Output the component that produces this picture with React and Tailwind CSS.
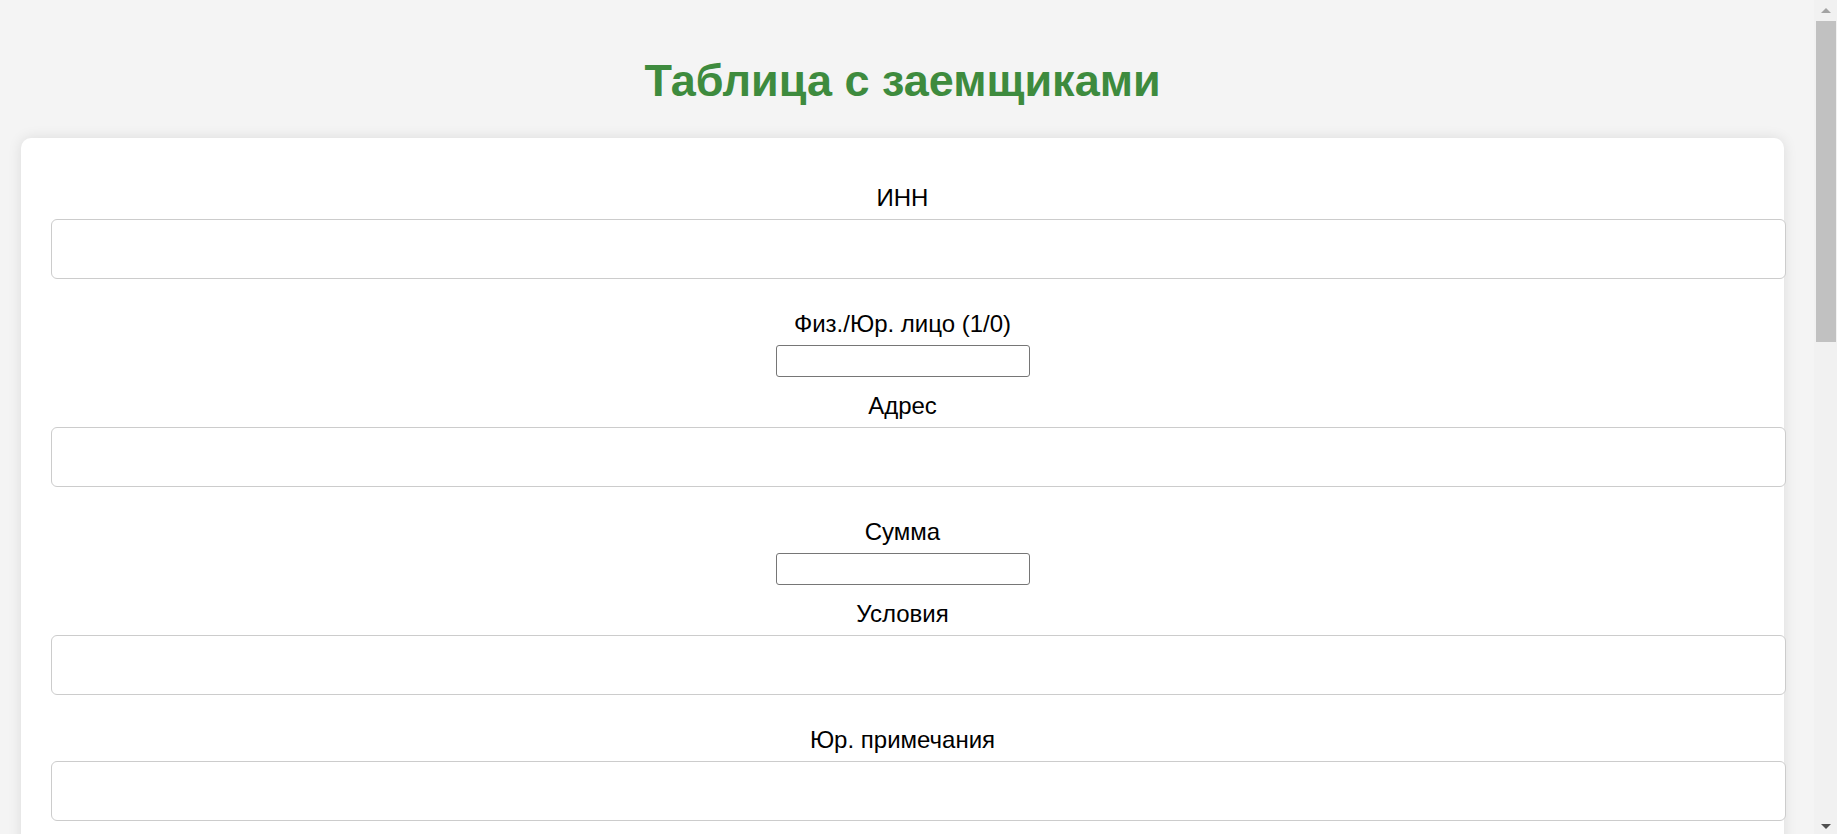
import React from "react";

function Label({ children }) {
  return (
    <label className="block mt-[15px] mb-[8px] text-[24px] leading-[27px] text-black text-center">
      {children}
    </label>
  );
}

function WideInput() {
  return (
    <input
      type="text"
      className="block w-[calc(100%+32px)] h-[60px] mb-[16px] bg-white border border-[#cccccc] rounded-[6px] px-[15px] outline-none"
    />
  );
}

function SmallInput() {
  return (
    <input
      type="text"
      className="block self-center w-[254px] h-[32px] bg-white border border-[#767676] rounded-[3px] px-[3px] outline-none"
    />
  );
}

const fields = [
  { label: "ИНН", wide: true },
  { label: "Физ./Юр. лицо (1/0)", wide: false },
  { label: "Адрес", wide: true },
  { label: "Сумма", wide: false },
  { label: "Условия", wide: true },
  { label: "Юр. примечания", wide: true },
];

export default function App() {
  return (
    <div className="flex h-screen overflow-hidden font-['Liberation_Sans',Arial,sans-serif]">
      <div className="flex-1 min-w-0 overflow-hidden bg-[#f4f4f4]">
        <div className="ml-[21px] w-[1763px] pt-[55px]">
          <h1 className="text-center text-[45px] leading-[52px] font-bold text-[#3e8b3e] mb-[31px]">
            Таблица с заемщиками
          </h1>
          <form className="flex flex-col bg-white rounded-[10px] shadow-[0_0_14px_rgba(0,0,0,0.1)] px-[30px] pt-[31px] pb-[300px]">
            {fields.map((f) => (
              <div key={f.label} className="flex flex-col">
                <Label>{f.label}</Label>
                {f.wide ? <WideInput /> : <SmallInput />}
              </div>
            ))}
          </form>
        </div>
      </div>
      <div className="w-[23px] h-full bg-[#f1f1f1] flex flex-col">
        <div className="h-[21px] flex items-center justify-center">
          <svg width="10" height="5" viewBox="0 0 10 5" className="mt-[-1px]">
            <polygon points="0,5 5,0 10,5" fill="#a3a3a3" />
          </svg>
        </div>
        <div className="ml-[2px] w-[20px] h-[321px] bg-[#c1c1c1]" />
        <div className="flex-1" />
        <div className="h-[21px] flex items-center justify-center">
          <svg width="10" height="5" viewBox="0 0 10 5" className="mt-[6px]">
            <polygon points="0,0 10,0 5,5" fill="#505050" />
          </svg>
        </div>
      </div>
    </div>
  );
}
